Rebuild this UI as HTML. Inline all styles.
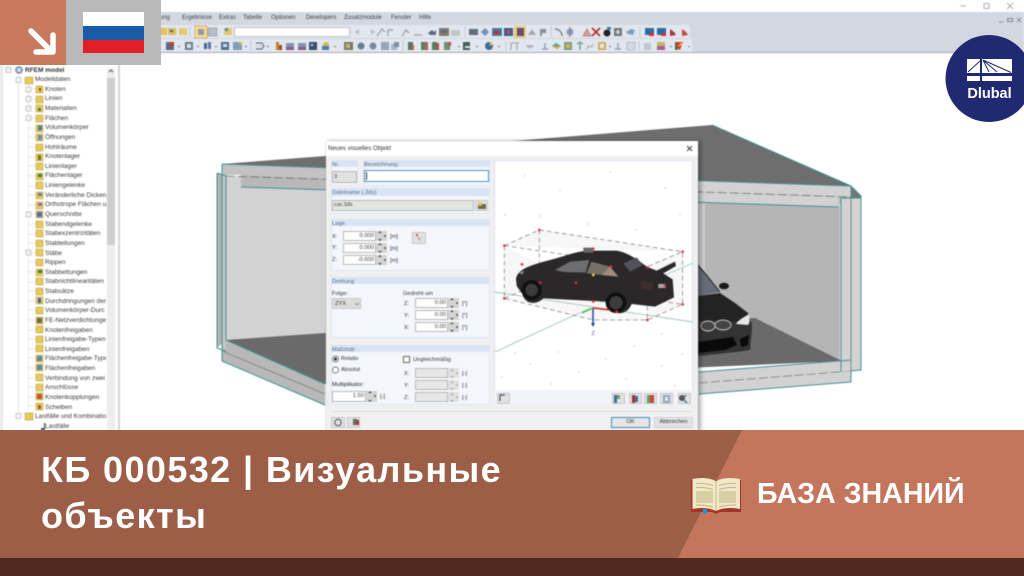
<!DOCTYPE html>
<html lang="de">
<head>
<meta charset="utf-8">
<title>КБ 000532 | Визуальные объекты</title>
<style>
html,body{margin:0;padding:0;background:#fff}
body{width:1024px;height:576px;overflow:hidden;position:relative;font-family:"Liberation Sans",sans-serif}
.abs,.abs *{box-sizing:border-box}
#shot{position:absolute;left:0;top:0;width:1024px;height:432px;overflow:hidden;filter:blur(.4px);background:#fff}
#shot svg{position:absolute;left:0;top:0}
.m{position:absolute;top:14px;font-size:6px;color:#444;line-height:9px;white-space:nowrap}
.t{position:absolute;font-size:6.5px;line-height:9px;color:#3c3c3c;white-space:nowrap;margin-top:-4.5px}
#tree{position:absolute;left:0;top:65px;width:106px;height:367px;overflow:hidden}
#tree .t{margin-top:-69.5px}
#dlg{position:absolute;left:326px;top:141px;width:372px;height:291px;background:#f0f0f0;box-shadow:3px 0 4px rgba(0,0,0,.3),0 0 1px #888}
.d{position:absolute;font-size:5.7px;line-height:8px;color:#333;white-space:nowrap}
.g{position:absolute;background:#f4f6fb;border:1px solid #dfe5f2;border-top:0;border-radius:0 0 2px 2px}
.h{position:absolute;left:0;right:0;top:0;height:7px;background:#d8e4f4}
.i{position:absolute;background:#fff;border:1px solid #b9b9b9;font-size:5.8px;line-height:8px;color:#444;text-align:right;padding:0 1px}
.s{position:absolute;background:#d4d4d4}
.b{position:absolute;background:#e1e1e1;border:1px solid #c8c8c8}
</style>
</head>
<body>
<div id="shot" class="abs">
  <div style="position:absolute;left:0;top:12px;width:1024px;height:41px;background:#d3d7df;border-bottom:1px solid #aaa"></div>
  <div style="position:absolute;left:160px;top:25px;width:530px;height:13px;background:#e2e6ee"></div>
  <div style="position:absolute;left:160px;top:39px;width:532px;height:13px;background:#e2e6ee"></div>
  <div style="position:absolute;left:234px;top:27px;width:116px;height:10px;background:#fff;border:1px solid #c4c4c4"></div>

  <div class="m" style="left:160px">ung</div>
  <div class="m" style="left:182px">Ergebnisse</div>
  <div class="m" style="left:219px">Extras</div>
  <div class="m" style="left:243px">Tabelle</div>
  <div class="m" style="left:271px">Optionen</div>
  <div class="m" style="left:306px">Developers</div>
  <div class="m" style="left:344px">Zusatzmodule</div>
  <div class="m" style="left:391px">Fenster</div>
  <div class="m" style="left:419px">Hilfe</div>

  <svg width="1024" height="432" viewBox="0 0 1024 432">
    <!-- window controls -->
    <g stroke="#999" fill="none" stroke-width=".8">
      <path d="M960 6h6M984 3.500h5v5h-5zM1007 3l6 6M1013 3l-6 6"/>
      <path d="M999 22h4M1007.500 18.500h5v3h-5zM1017 18l4 4M1021 18l-4 4" stroke="#777"/>
    </g>
    <!-- toolbar row 1 -->
    <g>
      <rect x="160" y="28" width="7" height="7" fill="#e3c25a"/>
      <rect x="168" y="28" width="8" height="7" fill="#d6c05c"/><rect x="170" y="30" width="3" height="2" fill="#566"/>
      <rect x="179" y="28" width="8" height="7" fill="#e7c96c"/>
      <rect x="195" y="26" width="12" height="12" fill="#f6d9a2" stroke="#d8a75c" stroke-width=".8"/><rect x="198" y="29" width="6" height="6" fill="#9a9a9a"/>
      <rect x="208" y="28" width="9" height="8" fill="#b8bcc6" stroke="#888" stroke-width=".5"/>
      <rect x="224" y="28" width="8" height="7" fill="#e4c66c"/><rect x="225" y="28" width="3" height="3" fill="#5a87b8"/>
      <path d="M355 32l4-3v6zM371 29l4 3-4 3z" fill="#b6bdd0"/>
      <path d="M377 36l5-7 3 3M388 36v-6h5M402 36l4-6 3 3M414 35h8" stroke="#a8a8ac" stroke-width="1.500" fill="none"/>
      <path d="M428 33l4-3 2 2 2-2v5h-6z" fill="#59697f"/>
      <rect x="439" y="28" width="10" height="8" fill="#8d7a5e"/><rect x="441" y="30" width="6" height="3" fill="#4a6f9c"/>
      <rect x="451" y="30" width="9" height="6" fill="#c5c5c8"/>
      <rect x="469" y="29" width="9" height="6" fill="#5e6e78"/>
      <path d="M481 32l4-4 4 4-4 4z" fill="#6f93b8"/>
      <rect x="492" y="28" width="10" height="8" fill="#4479a8"/><rect x="494" y="31" width="6" height="3" fill="#b33"/>
      <rect x="504" y="28" width="9" height="8" fill="#34618e"/><rect x="507" y="30" width="3" height="4" fill="#d44"/>
      <rect x="514" y="26" width="12" height="12" fill="#f5c872"/><rect x="517" y="28" width="7" height="8" fill="#3d5c8e"/><rect x="519" y="30" width="3" height="4" fill="#d22"/>
      <path d="M528 35l4-6 4 6z" fill="#a9a9a9"/>
      <path d="M540 29h6v4h-4v3h-2z" fill="#8d8d95"/>
      <path d="M555 29c4 0 7 3 7 7" stroke="#888" stroke-width="1.500" fill="none"/>
      <circle cx="570" cy="32" r="3.500" fill="#7aa7c8"/><path d="M570 27v10" stroke="#c0605c"/>
      <path d="M583 36l4-7 4 7z" fill="#c9a6a0" stroke="#b55" stroke-width=".6"/>
      <path d="M592 28l8 8M600 28l-8 8" stroke="#b6302a" stroke-width="1.600"/>
      <circle cx="607" cy="33" r="3.500" fill="#222"/><rect x="607" y="27" width="4" height="3" fill="#4a7aa8"/>
      <rect x="614" y="28" width="8" height="8" fill="#6d7b75"/><circle cx="618" cy="32" r="2" fill="#ccc"/>
      <path d="M626 32l5-3 4 1-2 5-5-1z" fill="#7f9fc8"/>
      <rect x="645" y="28" width="9" height="7" fill="#2a6ca6"/><rect x="649" y="33" width="5" height="3" fill="#c33"/>
      <rect x="657" y="28" width="9" height="7" fill="#2a6ca6"/><rect x="661" y="33" width="5" height="3" fill="#c33"/>
      <path d="M670 36v-7l4 3 2 3z" fill="#a83535"/>
      <path d="M682 36v-7l4 3 2 3z" fill="#c24a3a"/>
      <path d="M688 36h2v-3" fill="#ddd"/>
    </g>
    <!-- toolbar row 2 -->
    <g>
      <rect x="166" y="42" width="8" height="8" fill="#5f6a7e"/><rect x="170" y="42" width="4" height="4" fill="#b83d3a"/>
      <rect x="185" y="42" width="8" height="8" fill="#6c7f93"/><rect x="187" y="44" width="4" height="4" fill="#dfe3e8"/>
      <rect x="204" y="43" width="3" height="6" fill="#44688e"/><rect x="208" y="42" width="3" height="7" fill="#59799b"/>
      <rect x="221" y="42" width="8" height="8" fill="#56718e"/><rect x="223" y="44" width="4" height="3" fill="#cfe0ea"/>
      <rect x="233" y="42" width="9" height="8" fill="#7e9cc0"/><rect x="239" y="42" width="3" height="3" fill="#d9b64f"/>
      <path d="M256 43h6l2 3-2 3h-6" stroke="#5a6675" fill="#d6dde8"/>
      <rect x="276" y="42" width="3" height="8" fill="#b8842e"/><rect x="279" y="45" width="3" height="5" fill="#b0443a"/>
      <rect x="286" y="43" width="8" height="7" fill="#7f97ad"/><rect x="286" y="47" width="8" height="3" fill="#8a5a86"/>
      <rect x="298" y="43" width="8" height="7" fill="#7f97ad"/><rect x="298" y="47" width="8" height="3" fill="#8a5a86"/>
      <rect x="309" y="42" width="8" height="8" fill="#35506e"/><rect x="311" y="44" width="2" height="2" fill="#ddd"/>
      <circle cx="326" cy="45" r="3" fill="#d5b652"/><rect x="322" y="46" width="7" height="4" fill="#4d7cab"/>
      <rect x="344" y="42" width="9" height="8" fill="#7a7a66"/><rect x="346" y="44" width="4" height="4" fill="#c9b377"/>
      <circle cx="361" cy="46" r="3.500" fill="#6a7f97"/>
      <circle cx="373" cy="46" r="3.500" fill="#7a8aa3"/>
      <rect x="381" y="42" width="8" height="8" fill="#93a5bb"/>
      <rect x="391" y="44" width="6" height="6" fill="#a8b4c6"/><rect x="394" y="42" width="5" height="5" fill="#7d8fa8"/>
      <rect x="408" y="42" width="5" height="8" fill="#4f7a5f"/><rect x="412" y="45" width="2" height="5" fill="#c25a4a"/>
      <rect x="421" y="42" width="4" height="8" fill="#52815a"/><rect x="425" y="42" width="3" height="8" fill="#b56358"/>
      <rect x="432" y="42" width="5" height="8" fill="#5a7c5c"/><rect x="437" y="43" width="2" height="7" fill="#b64a40"/>
      <rect x="444" y="42" width="6" height="8" fill="#6f8e72"/><rect x="449" y="42" width="2" height="4" fill="#c44"/>
      <rect x="463" y="42" width="7" height="8" fill="#44605a"/><rect x="465" y="46" width="5" height="2" fill="#d7dce2"/>
      <circle cx="489" cy="46" r="4" fill="#3e6f9a"/><circle cx="491" cy="44" r="1.500" fill="#e0c050"/>
      <path d="M511 50v-7h6v7M517 43h2" stroke="#aaa" stroke-width="1.200" fill="none"/>
      <path d="M526 45h8l-2 3h-4z" fill="#b4b4b8"/>
      <path d="M542 49h6M545 43v6" stroke="#8fa6be" stroke-width="1.500"/>
      <path d="M552 46l4-3 5 3-4 3z" fill="#44a7ad"/><path d="M552 46l5 3 4-3" fill="#d9a63a"/>
      <rect x="564" y="42" width="8" height="8" fill="#78a08a"/><rect x="566" y="44" width="4" height="4" fill="#d6b24c"/>
      <path d="M580 50v-7M577 44l3-2 3 2" stroke="#6d9d88" stroke-width="1.300" fill="none"/>
      <path d="M586 49l8-5M587 46l6 1" stroke="#bbb" stroke-width="1.300"/>
      <rect x="598" y="42" width="8" height="8" fill="#c9b25a"/><rect x="600" y="44" width="4" height="4" fill="#e8e8e8"/>
      <path d="M615 49h6M618 43v6" stroke="#8fa6be" stroke-width="1.500"/>
      <rect x="627" y="42" width="8" height="8" fill="#d5d8e0" stroke="#aab" stroke-width=".6"/>
      <rect x="644" y="43" width="7" height="7" fill="#c2c7cc"/>
      <rect x="657" y="42" width="8" height="4" fill="#c9b26a"/><rect x="657" y="46" width="8" height="4" fill="#a0658c"/>
      <path d="M675 42h8l-3 8-5-3z" fill="#cf3c30"/><path d="M675 42l3 8h-3z" fill="#2d7a3b"/><path d="M677 47l5-5v3z" fill="#e8c33c"/>
    </g>
    <!-- separators and dropdown dots -->
    <g fill="#777">
      <rect x="178" y="46" width="2" height="1"/><rect x="197" y="46" width="2" height="1"/><rect x="215" y="46" width="2" height="1"/><rect x="245" y="46" width="2" height="1"/><rect x="267" y="46" width="2" height="1"/><rect x="334" y="46" width="2" height="1"/><rect x="458" y="46" width="2" height="1"/><rect x="476" y="46" width="2" height="1"/><rect x="498" y="46" width="2" height="1"/><rect x="609" y="46" width="2" height="1"/><rect x="670" y="46" width="2" height="1"/><rect x="688" y="46" width="2" height="1"/>
    </g>
    <path d="M251 41v10M403 41v10M506 41v10M639 41v10M465 26v11M551 26v11M640 26v11M190 26v11" stroke="#c6c9d2"/>

    <!-- 3D model -->
    <path d="M222 164L325 156 712 125 851 186Z" fill="#6e6e6e"/>
    <path d="M712 125L851 186" stroke="#3d8f8a" stroke-width="1"/>
    <path d="M851 186L861 196V200L851 198Z" fill="#777"/>
    <path d="M226 176L700 190 840 206V360L226 340Z" fill="#d2d2d2"/>
    <path d="M705 200L840 206V360L705 310Z" fill="#b5b5b5"/>
    <path d="M699 200H705V320H699Z" fill="#d0d0d0"/>
    <path d="M226 340L325 333 755 318 842 361 325 384Z" fill="#6a6a6a"/>
    <path d="M222 164L851 186V197L838 207 241 187V175L222 175Z" fill="#c2c2c2"/>
    <path d="M241 175L325 179 838 197V207L241 187Z" fill="#b8b8b8"/>
    <path d="M699 181L851 186V197L699 191Z M699 191L838 197V207L699 202Z" fill="#d2d2d2"/>
    <path d="M222 164L851 186M241 187L838 207" stroke="#3f938f" stroke-width="1" fill="none"/>
    <path d="M226 176L851 197" stroke="#666" stroke-width=".7" stroke-dasharray="9 3" fill="none"/>
    <path d="M222 164V175" stroke="#3f938f"/>
    <path d="M226 340L325 384 325 405 222 361V348Z" fill="#b8b8b8"/>
    <path d="M699 372L851 360V382L699 394Z" fill="#d2d2d2"/>
    <path d="M226 340L325 384M222 361L325 405M699 372L851 360M699 394L851 382" stroke="#3f938f" fill="none"/>
    <path d="M222 351L325 394" stroke="#666" stroke-width=".6"/>
    <path d="M699 383L851 371" stroke="#666" stroke-width=".6" stroke-dasharray="9 3"/>
    <path d="M217 173L226 176V340L217 348Z" fill="#b2b2b2"/>
    <path d="M222 175H226V350H222Z" fill="#c4c4c4"/>
    <path d="M217 173V348L226 351M217 173L226 176V340M222 175V361" stroke="#3f938f" fill="none"/>
    <path d="M841 198H861V370L841 372Z" fill="#d2d2d2"/>
    <path d="M851 186L861 196V370L851 371" fill="none" stroke="#3f938f"/>
    <path d="M851 186V382M841 198V372M841 198H861M841 361L851 360" stroke="#3f938f" fill="none"/>
    <path d="M851 197V372" stroke="#888" stroke-width=".6"/>

    <!-- BMW front, behind dialog -->
    <g>
      <path d="M698 265L708 277 720 292 698 296Z" fill="#666c78"/>
      <path d="M698 265L708 277 720 292" stroke="#222" fill="none"/>
      <ellipse cx="724" cy="286" rx="5" ry="3.300" fill="#1b1b1b"/>
      <path d="M698 296L720 293 735 303 748 313 752 327 750 350 735 352 698 356Z" fill="#232323"/>
      <path d="M698 320L752 322 750 350 735 352 698 356Z" fill="#333"/>
      <path d="M736 324C738 320 746 316 749 314 750 319 750 323 748 325Z" fill="#e6e6e6"/>
      <ellipse cx="708" cy="326" rx="7" ry="5" fill="#444" stroke="#bbb" stroke-width="1"/>
      <ellipse cx="723" cy="325" rx="8" ry="5" fill="#444" stroke="#bbb" stroke-width="1"/>
      <path d="M698 342L733 337 737 345 725 350 698 353Z" fill="#0a0a0a"/>
      <path d="M740 339L749 335 748 345 741 347Z" fill="#0a0a0a"/>
    </g>

    <!-- tree guides and scrollbar -->
    <rect x="118" y="53" width="2" height="379" fill="#d4d4d8"/>
    <rect x="0" y="65" width="3" height="367" fill="#e9e9ec"/>
    <rect x="107" y="68" width="8" height="362" fill="#ededed"/>
    <rect x="107" y="78" width="8" height="167" fill="#cdcdcd"/>
    <path d="M109 72l2-2 2 2" stroke="#555" fill="none"/>
  </svg>

  <!-- tree -->
  <div id="tree">
    <svg width="106" height="367" viewBox="0 65 106 367">
      <path d="M18.500 75V416M28.500 85V118M28.500 214V215M28.500 252V253" stroke="#bbb" stroke-width=".8" stroke-dasharray="1 1" fill="none"/>
      <path d="M28.500 85V410M28.500 89h7M28.500 99h7M28.500 108h7M28.500 118h7M28.500 128h7M28.500 137h7M28.500 147h7M28.500 157h7M28.500 166h7M28.500 176h7M28.500 186h7M28.500 195h7M28.500 205h7M28.500 214h7M28.500 224h7M28.500 234h7M28.500 243h7M28.500 253h7M28.500 262h7M28.500 272h7M28.500 282h7M28.500 291h7M28.500 301h7M28.500 310h7M28.500 320h7M28.500 330h7M28.500 339h7M28.500 349h7M28.500 358h7M28.500 368h7M28.500 378h7M28.500 387h7M28.500 397h7M28.500 406h7" stroke="#c4c4c4" stroke-width=".7" stroke-dasharray="1 1" fill="none"/>
      <!-- folders -->
      <g fill="#e7c85a" stroke="#b69a3a" stroke-width=".5">
        <rect x="25" y="77" width="8" height="7"/>
        <rect x="36" y="86" width="7" height="7"/><rect x="36" y="96" width="7" height="7"/><rect x="36" y="105" width="7" height="7"/><rect x="36" y="115" width="7" height="7"/><rect x="36" y="125" width="7" height="7"/><rect x="36" y="134" width="7" height="7"/><rect x="36" y="144" width="7" height="7"/><rect x="36" y="154" width="7" height="7"/><rect x="36" y="163" width="7" height="7"/><rect x="36" y="173" width="7" height="7"/><rect x="36" y="182" width="7" height="7"/><rect x="36" y="192" width="7" height="7"/><rect x="36" y="202" width="7" height="7"/><rect x="36" y="211" width="7" height="7"/><rect x="36" y="221" width="7" height="7"/><rect x="36" y="230" width="7" height="7"/><rect x="36" y="240" width="7" height="7"/><rect x="36" y="249" width="7" height="7"/><rect x="36" y="259" width="7" height="7"/><rect x="36" y="269" width="7" height="7"/><rect x="36" y="278" width="7" height="7"/><rect x="36" y="288" width="7" height="7"/><rect x="36" y="297" width="7" height="7"/><rect x="36" y="307" width="7" height="7"/><rect x="36" y="317" width="7" height="7"/><rect x="36" y="326" width="7" height="7"/><rect x="36" y="336" width="7" height="7"/><rect x="36" y="345" width="7" height="7"/><rect x="36" y="355" width="7" height="7"/><rect x="36" y="364" width="7" height="7"/><rect x="36" y="374" width="7" height="7"/><rect x="36" y="384" width="7" height="7"/><rect x="36" y="393" width="7" height="7"/><rect x="36" y="403" width="7" height="7"/>
        <rect x="25" y="413" width="8" height="7"/>
      </g>
      <!-- glyphs on folders -->
      <g>
        <rect x="38" y="125.500" width="4" height="5" fill="#4c7ca8"/><rect x="38" y="135" width="4" height="5" fill="#6e8fa8"/><rect x="38" y="155" width="3" height="5" fill="#6a7a2a"/><rect x="38" y="174" width="4" height="3" fill="#3e7a4a"/><rect x="38" y="193" width="4" height="3" fill="#5a7fa8"/><rect x="38" y="203" width="4" height="3" fill="#9a6fa8"/><rect x="37" y="212" width="5" height="5" fill="#5a64c8"/><rect x="38" y="270" width="4" height="3" fill="#3e7a4a"/><rect x="38" y="298" width="3" height="5" fill="#3d66a8"/><rect x="37" y="318" width="5" height="5" fill="#6a6a5a"/><rect x="37" y="356" width="5" height="5" fill="#5a88a8"/><rect x="37" y="365" width="5" height="5" fill="#5a88a8"/><rect x="37" y="394" width="5" height="5" fill="#c2552c"/><rect x="38" y="405" width="3" height="4" fill="#8a6a2a"/><rect x="39" y="88" width="2" height="3" fill="#7a5a1a"/><rect x="38" y="108" width="3" height="3" fill="#5a7a3a"/>
      </g>
      <!-- expanders -->
      <g fill="#f4f4f4" stroke="#aaa" stroke-width=".6">
        <rect x="6" y="67.500" width="5" height="5"/><rect x="16" y="77.500" width="5" height="5"/><rect x="26" y="87" width="5" height="5"/><rect x="26" y="96.500" width="5" height="5"/><rect x="26" y="106" width="5" height="5"/><rect x="26" y="115.500" width="5" height="5"/><rect x="26" y="212" width="5" height="5"/><rect x="26" y="250" width="5" height="5"/><rect x="16" y="413.500" width="5" height="5"/>
      </g>
      <circle cx="19" cy="70" r="3.800" fill="#6d86a8"/><rect x="17" y="68" width="4" height="4" fill="#d7dfe8"/>
      <path d="M45 428h-4v2h4z" fill="#345"/><rect x="44" y="423" width="1" height="6" fill="#345"/>
    </svg>
    <div class="t" style="left:25px;top:70px;font-weight:bold;color:#333">RFEM model</div>
    <div class="t" style="left:35px;top:79.600px">Modelldaten</div>
    <div class="t" style="left:45px;top:89.300px">Knoten</div>
    <div class="t" style="left:45px;top:98.900px">Linien</div>
    <div class="t" style="left:45px;top:108.500px">Materialien</div>
    <div class="t" style="left:45px;top:118.200px">Flächen</div>
    <div class="t" style="left:45px;top:127.800px">Volumenkörper</div>
    <div class="t" style="left:45px;top:137.400px">Öffnungen</div>
    <div class="t" style="left:45px;top:147px">Hohlräume</div>
    <div class="t" style="left:45px;top:156.700px">Knotenlager</div>
    <div class="t" style="left:45px;top:166.300px">Linienlager</div>
    <div class="t" style="left:45px;top:175.900px">Flächenlager</div>
    <div class="t" style="left:45px;top:185.600px">Liniengelenke</div>
    <div class="t" style="left:45px;top:195.200px">Veränderliche Dicken</div>
    <div class="t" style="left:45px;top:204.800px">Orthotrope Flächen u</div>
    <div class="t" style="left:45px;top:214.400px">Querschnitte</div>
    <div class="t" style="left:45px;top:224.100px">Stabendgelenke</div>
    <div class="t" style="left:45px;top:233.700px">Stabexzentrizitäten</div>
    <div class="t" style="left:45px;top:243.300px">Stabteilungen</div>
    <div class="t" style="left:45px;top:253px">Stäbe</div>
    <div class="t" style="left:45px;top:262.600px">Rippen</div>
    <div class="t" style="left:45px;top:272.200px">Stabbettungen</div>
    <div class="t" style="left:45px;top:281.900px">Stabnichtlinearitäten</div>
    <div class="t" style="left:45px;top:291.500px">Stabsätze</div>
    <div class="t" style="left:45px;top:301.100px">Durchdringungen der</div>
    <div class="t" style="left:45px;top:310.800px">Volumenkörper-Durc</div>
    <div class="t" style="left:45px;top:320.400px">FE-Netzverdichtunger</div>
    <div class="t" style="left:45px;top:330px">Knotenfreigaben</div>
    <div class="t" style="left:45px;top:339.600px">Linienfreigabe-Typen</div>
    <div class="t" style="left:45px;top:349.300px">Linienfreigaben</div>
    <div class="t" style="left:45px;top:358.900px">Flächenfreigabe-Type</div>
    <div class="t" style="left:45px;top:368.500px">Flächenfreigaben</div>
    <div class="t" style="left:45px;top:378.200px">Verbindung von zwei</div>
    <div class="t" style="left:45px;top:387.800px">Anschlüsse</div>
    <div class="t" style="left:45px;top:397.400px">Knotenkopplungen</div>
    <div class="t" style="left:45px;top:407px">Scheiben</div>
    <div class="t" style="left:35px;top:416.700px">Lastfälle und Kombinatio</div>
    <div class="t" style="left:45px;top:426.300px">Lastfälle</div>
  </div>

  <!-- dialog -->
  <div id="dlg">
    <div style="position:absolute;left:0;top:0;width:372px;height:15px;background:#fff"></div>
    <div class="d" style="left:2px;top:4px;font-size:6.200px;color:#333">Neues visuelles Objekt</div>
    <svg width="10" height="10" style="left:359px;top:3px"><path d="M2 2l5 5M7 2l-5 5" stroke="#333" stroke-width=".9"/></svg>

    <div class="g" style="left:5px;top:19px;width:27px;height:26px"><div class="h"></div></div>
    <div class="d" style="left:6px;top:20px;font-size:5.400px;color:#5a6a80">Nr.</div>
    <div class="i" style="left:6px;top:30px;width:25px;height:12px;background:#e2e2e2;text-align:left;line-height:10px">3</div>

    <div class="g" style="left:37px;top:19px;width:127px;height:26px"><div class="h"></div></div>
    <div class="d" style="left:38px;top:20px;font-size:5.800px;color:#5a6a80">Bezeichnung:</div>
    <div class="i" style="left:38px;top:29px;width:125px;height:12px;border-color:#4d94c4"></div>
    <div style="position:absolute;left:40px;top:31px;width:1px;height:8px;background:#333"></div>

    <div class="g" style="left:5px;top:47px;width:159px;height:26px"><div class="h" style="height:8px"></div></div>
    <div class="d" style="left:6px;top:48px;font-size:5.800px;color:#5a6a80">Dateiname (.3ds)</div>
    <div class="i" style="left:6px;top:59px;width:142px;height:11px;background:#e4e4e2;text-align:left;line-height:9px">car.3ds</div>
    <div class="b" style="left:149px;top:59px;width:13px;height:11px"></div>
    <svg width="12" height="10" style="left:150px;top:60px"><path d="M2 3h8v5H2z" fill="#6f6a48"/><circle cx="4" cy="3" r="2" fill="#e3c94a"/></svg>

    <div class="g" style="left:5px;top:78px;width:159px;height:52px"><div class="h"></div></div>
    <div class="d" style="left:6px;top:79px;font-size:5.800px;color:#5a6a80">Lage</div>
    <div class="d" style="left:6px;top:92px">X:</div>
    <div class="i" style="left:17px;top:90px;width:33px;height:10px">0.000</div><div class="s" style="left:50px;top:90px;width:11px;height:10px"></div>
    <div class="d" style="left:64px;top:92px">[m]</div>
    <div class="d" style="left:6px;top:103px">Y:</div>
    <div class="i" style="left:17px;top:102px;width:33px;height:10px">0.000</div><div class="s" style="left:50px;top:102px;width:11px;height:10px"></div>
    <div class="d" style="left:64px;top:104px">[m]</div>
    <div class="d" style="left:6px;top:115px">Z:</div>
    <div class="i" style="left:17px;top:114px;width:33px;height:10px">-0.600</div><div class="s" style="left:50px;top:114px;width:11px;height:10px"></div>
    <div class="d" style="left:64px;top:116px">[m]</div>
    <div class="b" style="left:86px;top:91px;width:14px;height:12px"></div>
    <svg width="10" height="10" style="left:88px;top:92px"><path d="M2 1l5 5-2 2z" fill="#c9a9a9"/><circle cx="3" cy="2" r="1" fill="#c33"/></svg>

    <div class="g" style="left:5px;top:136px;width:159px;height:61px"><div class="h"></div></div>
    <div class="d" style="left:6px;top:137px;font-size:5.800px;color:#5a6a80">Drehung</div>
    <div class="d" style="left:6px;top:149px">Folge:</div>
    <div class="d" style="left:77px;top:149px">Gedreht um</div>
    <div class="b" style="left:6px;top:157px;width:29px;height:11px;background:#dcdcdc"></div>
    <div class="d" style="left:9px;top:159px">ZYX</div>
    <svg width="6" height="4" style="left:28px;top:161px"><path d="M1 1l2 2 2-2" stroke="#777" fill="none" stroke-width=".7"/></svg>
    <div class="d" style="left:78px;top:159px">Z:</div>
    <div class="i" style="left:89px;top:157px;width:33px;height:10px">0.00</div><div class="s" style="left:122px;top:157px;width:11px;height:10px"></div>
    <div class="d" style="left:136px;top:159px">[°]</div>
    <div class="d" style="left:78px;top:171px">Y:</div>
    <div class="i" style="left:89px;top:169px;width:33px;height:10px">0.00</div><div class="s" style="left:122px;top:169px;width:11px;height:10px"></div>
    <div class="d" style="left:136px;top:171px">[°]</div>
    <div class="d" style="left:78px;top:183px">X:</div>
    <div class="i" style="left:89px;top:181px;width:33px;height:10px">0.00</div><div class="s" style="left:122px;top:181px;width:11px;height:10px"></div>
    <div class="d" style="left:136px;top:183px">[°]</div>

    <div class="g" style="left:5px;top:204px;width:159px;height:60px"><div class="h"></div></div>
    <div class="d" style="left:6px;top:205px;font-size:5.800px;color:#5a6a80">Maßstab</div>
    <svg width="12" height="24" style="left:5px;top:213px"><circle cx="4.500" cy="5" r="3" fill="#fff" stroke="#555" stroke-width=".7"/><circle cx="4.500" cy="5" r="1.600" fill="#333"/><circle cx="4.500" cy="16" r="3" fill="#fff" stroke="#555" stroke-width=".7"/></svg>
    <div class="d" style="left:15px;top:214px">Relativ</div>
    <div class="d" style="left:15px;top:225px">Absolut</div>
    <div style="position:absolute;left:77px;top:215px;width:7px;height:7px;background:#fff;border:1px solid #666"></div>
    <div class="d" style="left:87px;top:215px">Ungleichmäßig</div>
    <div class="d" style="left:6px;top:240px;color:#222">Multiplikator:</div>
    <div class="i" style="left:6px;top:250px;width:34px;height:11px">1.50</div><div class="s" style="left:40px;top:250px;width:11px;height:11px"></div>
    <div class="d" style="left:54px;top:252px">[-]</div>
    <div class="d" style="left:78px;top:229px">X:</div>
    <div class="i" style="left:89px;top:227px;width:33px;height:10px;background:#e7e7e7"></div><div class="s" style="left:122px;top:227px;width:11px;height:10px;background:#e2e2e2"></div>
    <div class="d" style="left:136px;top:229px">[-]</div>
    <div class="d" style="left:78px;top:241px">Y:</div>
    <div class="i" style="left:89px;top:239px;width:33px;height:10px;background:#e7e7e7"></div><div class="s" style="left:122px;top:239px;width:11px;height:10px;background:#e2e2e2"></div>
    <div class="d" style="left:136px;top:241px">[-]</div>
    <div class="d" style="left:78px;top:253px">Z:</div>
    <div class="i" style="left:89px;top:251px;width:33px;height:10px;background:#e7e7e7"></div><div class="s" style="left:122px;top:251px;width:11px;height:10px;background:#e2e2e2"></div>
    <div class="d" style="left:136px;top:253px">[-]</div>

    <!-- spinner marks -->
    <svg width="168" height="270" style="left:0;top:0">
      <g fill="#555">
        <path d="M52 92l2-2 2 2zM52 98l2 2 2-2zM52 104l2-2 2 2zM52 110l2 2 2-2zM52 116l2-2 2 2zM52 122l2 2 2-2z"/>
        <path d="M124 159l2-2 2 2zM124 165l2 2 2-2zM124 171l2-2 2 2zM124 177l2 2 2-2zM124 183l2-2 2 2zM124 189l2 2 2-2zM42 252l2-2 2 2zM42 259l2 2 2-2z"/>
        <circle cx="59" cy="95" r="1"/><circle cx="59" cy="107" r="1"/><circle cx="59" cy="119" r="1"/><circle cx="131" cy="162" r="1"/><circle cx="131" cy="174" r="1"/><circle cx="131" cy="186" r="1"/><circle cx="49" cy="255" r="1"/>
      </g>
      <g fill="#aaa">
        <path d="M124 230l2-2 2 2zM124 235l2 2 2-2zM124 242l2-2 2 2zM124 247l2 2 2-2zM124 254l2-2 2 2zM124 259l2 2 2-2z"/>
        <circle cx="131" cy="232" r="1"/><circle cx="131" cy="244" r="1"/><circle cx="131" cy="256" r="1"/>
      </g>
    </svg>

    <!-- preview -->
    <div style="position:absolute;left:168px;top:19px;width:199px;height:245px;background:#fff;border:1px solid #dcdff2"></div>
    <svg width="199" height="245" viewBox="494 160 199 245" style="left:168px;top:19px">
      <g fill="#c8c8d0">
        <circle cx="525" cy="176" r=".7"/><circle cx="560" cy="190" r=".7"/><circle cx="610" cy="172" r=".7"/><circle cx="665" cy="188" r=".7"/><circle cx="505" cy="215" r=".7"/><circle cx="540" cy="216" r=".7"/><circle cx="588" cy="224" r=".7"/><circle cx="636" cy="230" r=".7"/><circle cx="680" cy="214" r=".7"/><circle cx="515" cy="353" r=".7"/><circle cx="558" cy="352" r=".7"/><circle cx="530" cy="364" r=".7"/><circle cx="606" cy="359" r=".7"/><circle cx="634" cy="346" r=".7"/><circle cx="662" cy="366" r=".7"/><circle cx="682" cy="354" r=".7"/><circle cx="579" cy="372" r=".7"/><circle cx="502" cy="377" r=".7"/><circle cx="551" cy="384" r=".7"/><circle cx="626" cy="379" r=".7"/><circle cx="675" cy="386" r=".7"/><circle cx="662" cy="334" r=".7"/>
      </g>
      <path d="M494 292L693 322M495 352L590 308M600 303L693 263" stroke="#9cc5b8" stroke-width=".9" fill="none"/>
      <g transform="translate(490 210) scale(.3333)">
        <path d="M43 107L148 60 578 125M43 107V265L310 330 472 330M43 107L472 170 578 125V283L472 330V170M148 60V220M43 265L148 220 578 283" fill="rgba(225,225,225,.25)" stroke="#888" stroke-width="2.400" stroke-dasharray="14 9"/>
        <path d="M78 205C85 180 110 168 180 150C225 138 260 124 295 122L380 122C415 128 445 150 470 170L500 182 555 155 558 168 520 190 548 208 552 262 495 290 425 282C410 320 365 320 346 275L160 265C140 285 105 285 97 252L80 228Z" fill="#2a2828"/>
        <path d="M280 113h30v15h-30z" fill="#666"/>
        <path d="M195 180L240 155 298 150 287 188 220 186Z" fill="#6e6e70"/>
        <path d="M290 190L304 155 360 170 385 200Z" fill="#75706c"/>
        <path d="M335 195L360 170 385 200Z" fill="#a38a7a"/>
        <path d="M400 160L440 142 458 165 420 185Z" fill="#525258"/>
        <circle cx="125" cy="240" r="30" fill="#111"/><circle cx="125" cy="240" r="19" fill="#3c3c3c"/>
        <circle cx="378" cy="278" r="31" fill="#111"/><circle cx="378" cy="278" r="20" fill="#3c3c3c"/>
        <path d="M505 222h22v12h-22z" fill="#aaa"/>
        <path d="M450 215h40l-4 24h-30z" fill="#3c2c2c"/>
        <path d="M85 188l18-5-6 10z" fill="#8a8a8a"/>
        <g fill="#e0303a">
          <circle cx="43" cy="107" r="4"/><circle cx="148" cy="60" r="4"/><circle cx="578" cy="125" r="4"/><circle cx="472" cy="172" r="4"/><circle cx="43" cy="265" r="4"/><circle cx="472" cy="330" r="4"/><circle cx="578" cy="283" r="4"/><circle cx="310" cy="116" r="4"/><circle cx="96" cy="163" r="4"/><circle cx="150" cy="218" r="4"/><circle cx="258" cy="218" r="4"/><circle cx="363" cy="170" r="4"/><circle cx="310" cy="274" r="4"/><circle cx="524" cy="227" r="4"/><circle cx="380" cy="305" r="4"/>
        </g>
        <circle cx="310" cy="195" r="4" fill="#f1d92c"/>
      </g>
      <path d="M593 308V325" stroke="#2a3fa8" stroke-width="1.500"/><path d="M591 323h4l-2 4z" fill="#2a3fa8"/>
      <path d="M593 308L582 313" stroke="#3ec23e" stroke-width="1.500"/>
      <path d="M593 308L610 310" stroke="#d0302a" stroke-width="1.500"/>
      <text x="591.500" y="335" font-family="Liberation Sans, sans-serif" font-size="5.500" fill="#4a4ab0">Z</text>
      <rect x="494" y="390" width="199" height="15" fill="#f1f3f9"/>
    </svg>
    <!-- preview buttons -->
    <div class="b" style="left:171px;top:252px;width:13px;height:11px"></div>
    <div class="b" style="left:286px;top:252px;width:13px;height:11px"></div>
    <div class="b" style="left:303px;top:252px;width:13px;height:11px"></div>
    <div class="b" style="left:318px;top:252px;width:13px;height:11px"></div>
    <div class="b" style="left:334px;top:252px;width:13px;height:11px"></div>
    <div class="b" style="left:352px;top:252px;width:13px;height:11px"></div>
    <svg width="200" height="14" viewBox="0 0 200 14" style="left:168px;top:251px">
      <path d="M6 9V3h5M6 3h1" stroke="#456" stroke-width="1.300" fill="none"/>
      <rect x="120" y="3" width="3" height="8" fill="#3b6f96"/><rect x="123" y="3" width="3" height="4" fill="#76a060"/>
      <rect x="138" y="3" width="3" height="8" fill="#a33"/><rect x="141" y="4" width="3" height="6" fill="#3b6f96"/>
      <rect x="153" y="3" width="3" height="8" fill="#6a9a60"/><rect x="156" y="3" width="4" height="8" fill="#c04a3a"/>
      <rect x="169" y="3" width="7" height="8" fill="#93a8c0"/><rect x="171" y="5" width="3" height="4" fill="#e4e8ee"/>
      <circle cx="188" cy="6" r="3" fill="#555"/><path d="M190 8l3 3M192 3l-2 2" stroke="#3b6f96" stroke-width="1.300"/>
    </svg>

    <!-- bottom -->
    <div style="position:absolute;left:5px;top:270px;width:362px;height:1px;background:#dcdcdc"></div>
    <div class="b" style="left:5px;top:276px;width:14px;height:11px"></div>
    <div class="b" style="left:21px;top:276px;width:13px;height:11px"></div>
    <svg width="32" height="11" style="left:5px;top:276px"><circle cx="7" cy="5.500" r="3.200" fill="none" stroke="#555"/><rect x="22" y="2" width="4" height="6" fill="#666"/><rect x="26" y="3" width="2" height="5" fill="#a33"/></svg>
    <div style="position:absolute;left:285px;top:276px;width:39px;height:11px;background:#e6e6e6;border:1px solid #3f8ec4;font-size:5.800px;line-height:9px;text-align:center;color:#333">OK</div>
    <div style="position:absolute;left:328px;top:276px;width:39px;height:11px;background:#e2e2e2;border:1px solid #d2d2d2;font-size:5.800px;line-height:9px;text-align:center;color:#333">Abbrechen</div>
  </div>
</div>

<!-- top-left badges -->
<div style="position:absolute;left:0;top:0;width:66px;height:65px;background:#c8785b"></div>
<div style="position:absolute;left:66px;top:0;width:95px;height:65px;background:#b9b9b9"></div>
<div style="position:absolute;left:83px;top:12px;width:61px;height:14px;background:#fff"></div>
<div style="position:absolute;left:83px;top:26px;width:61px;height:14px;background:#1a5ba8"></div>
<div style="position:absolute;left:83px;top:40px;width:61px;height:13px;background:#e02026"></div>
<svg width="66" height="65" style="position:absolute;left:0;top:0"><path d="M31 31L51 51M36 52H53V35" stroke="#fff" stroke-width="5.500" fill="none" stroke-linecap="round" stroke-linejoin="round"/></svg>

<!-- Dlubal logo -->
<svg width="90" height="90" viewBox="940 32 90 90" style="position:absolute;left:940px;top:32px">
  <circle cx="989" cy="78.500" r="43.500" fill="#1f2a72"/>
  <rect x="967" y="59" width="45" height="14" fill="#fff"/>
  <rect x="967" y="76" width="45" height="5" fill="#fff"/>
  <path d="M968 72L980 61M983 60L997 72M983 60L1011 72.500M983 60L989 72" stroke="#1f2a72" stroke-width="1" fill="none"/>
  <rect x="980" y="59" width="2" height="22" fill="#1f2a72"/>
  <text x="989.500" y="98" text-anchor="middle" font-family="Liberation Sans, sans-serif" font-weight="bold" font-size="14.500" fill="#fff">Dlubal</text>
</svg>

<!-- banner -->
<div style="position:absolute;left:0;top:430px;width:1024px;height:128px;background:#9d5e48"></div>
<svg width="1024" height="146" style="position:absolute;left:0;top:430px"><path d="M742 0H1024V128H678Z" fill="#c3765b"/></svg>
<div style="position:absolute;left:0;top:558px;width:1024px;height:18px;background:#4f2a1e"></div>
<div style="position:absolute;left:41px;top:447px;width:620px;font-size:36px;line-height:46px;font-weight:bold;color:#fff;letter-spacing:1.400px">КБ 000532 | Визуальные<br>объекты</div>
<div style="position:absolute;left:757px;top:476px;font-size:28.600px;line-height:36px;font-weight:bold;color:#fff;white-space:nowrap">БАЗА ЗНАНИЙ</div>
<svg width="52" height="38" viewBox="691 477 52 38" style="position:absolute;left:691px;top:477px">
  <path d="M691 480H741V512H720L716 514 712 512H691Z" fill="#a3352a"/>
  <path d="M692.500 479C702 477 710 478 716 481 722 478 730 477 740 479V509C730 507 722 508 716 511 710 508 702 507 692.500 509Z" fill="#f3e8c6"/>
  <path d="M716 481V511" stroke="#c8b78c"/>
  <path d="M696 483.500C702 483 708 484 713 485.500M719 485.500C724 484 730 483 736 483.500M696 487.500C702 487 708 488 713 489.500M719 489.500C724 488 730 487 736 487.500" stroke="#c9bd98" stroke-width="1.200" fill="none"/>
  <path d="M696 491H713V503H696ZM719 491H736V503H719Z" fill="#d9cda6"/>
  <path d="M696 505C702 505 708 505.500 713 507M719 507C724 505.500 730 505 736 505" stroke="#c9bd98" stroke-width="1.200" fill="none"/>
  <rect x="703" y="509" width="4" height="4.500" fill="#149ad6"/>
</svg>
</body>
</html>
